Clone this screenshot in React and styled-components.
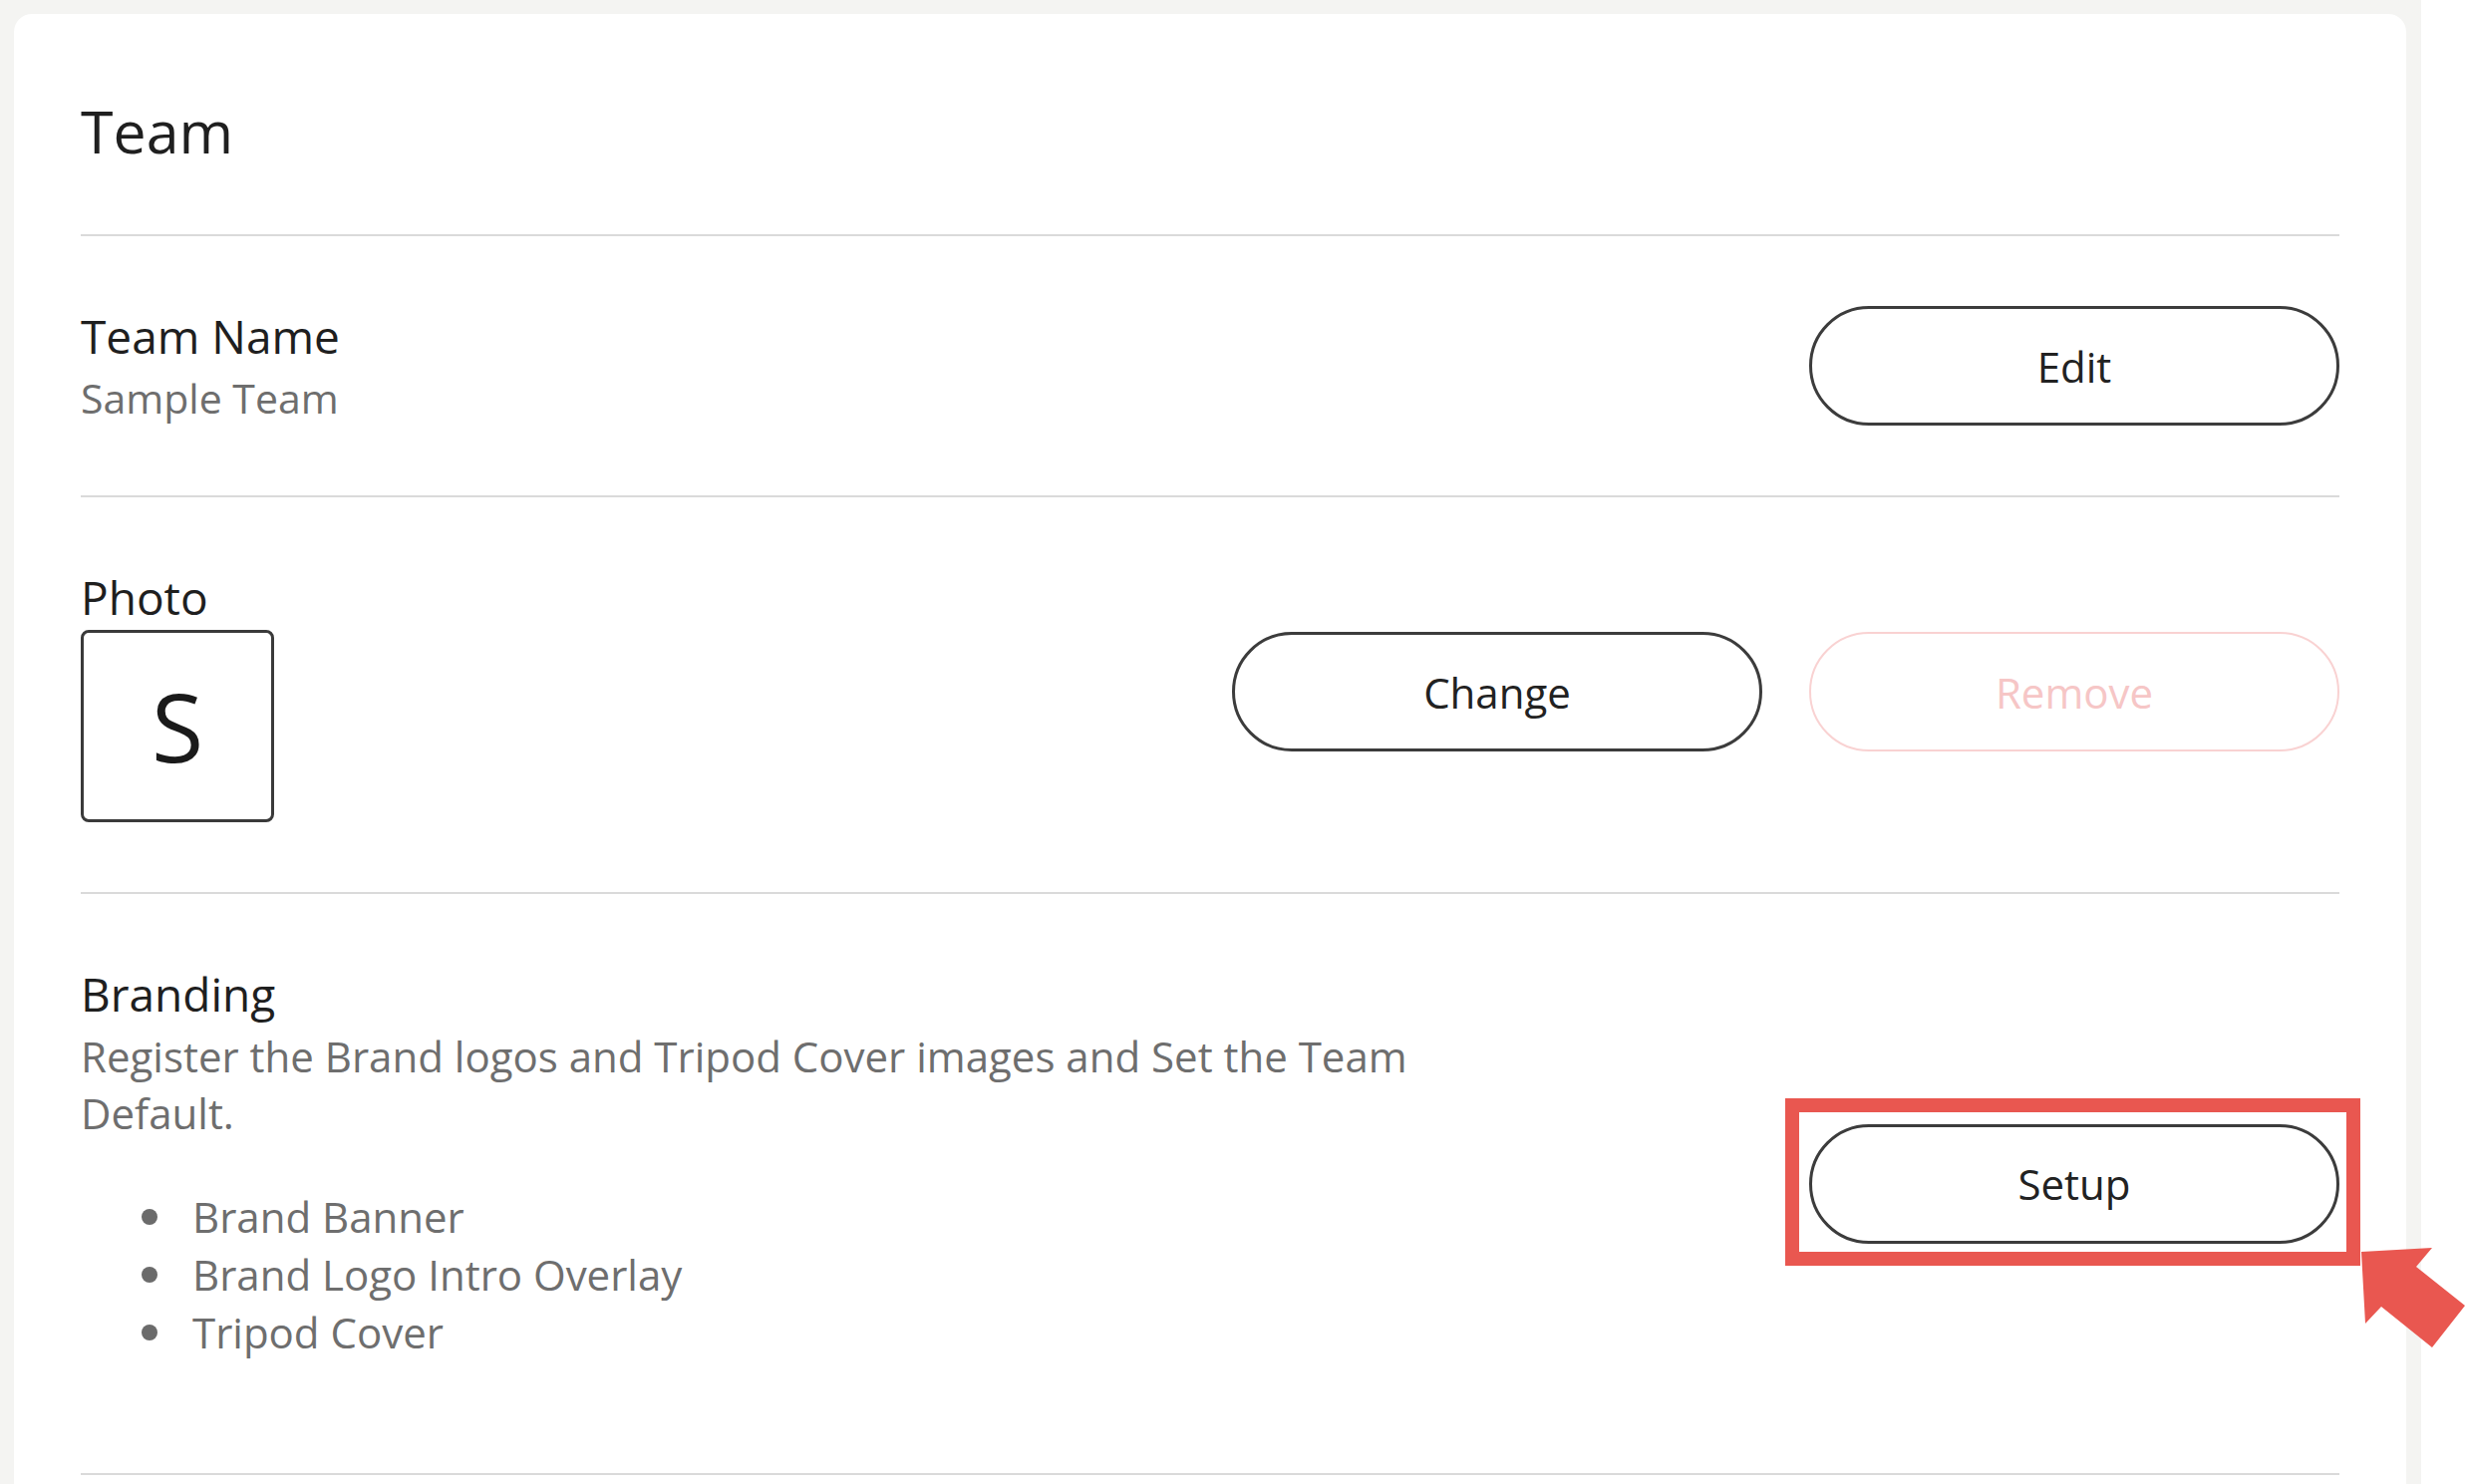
import React from "react"
import styled, { createGlobalStyle } from "styled-components"

// <========== DATA ==========>

const brandingItems = ["Brand Banner", "Brand Logo Intro Overlay", "Tripod Cover"]

// <========== COMPONENT ==========>

function App() {
  return (
    <Page>
      <GlobalStyle />
      <Backdrop>
        <Card>
          <Header>
            <Title>Team</Title>
          </Header>
          <Divider />

          <Row $pad={69.5}>
            <TextBlock>
              <Label>Team Name</Label>
              <Sub>Sample Team</Sub>
            </TextBlock>
            <PillButton>Edit</PillButton>
          </Row>
          <Divider />

          <PhotoSection>
            <Label>Photo</Label>
            <PhotoRow>
              <Avatar>S</Avatar>
              <ButtonGroup>
                <PillButton>Change</PillButton>
                <PillButton $danger>Remove</PillButton>
              </ButtonGroup>
            </PhotoRow>
          </PhotoSection>
          <Divider />

          <Row $pad={70}>
            <TextBlock>
              <Label>Branding</Label>
              <Description>
                Register the Brand logos and Tripod Cover images and Set the Team Default.
              </Description>
              <BulletList>
                {brandingItems.map((item) => (
                  <Bullet key={item}>{item}</Bullet>
                ))}
              </BulletList>
            </TextBlock>
            <Highlighted>
              <PillButton>Setup</PillButton>
              <HighlightFrame />
            </Highlighted>
          </Row>
          <Divider />
        </Card>
      </Backdrop>

      <Pointer viewBox="0 0 113 120" width="113" height="120">
        <polygon points="9,16 80,12 64,31 113,70 80,112 29,71 13,88" fill="#e95750" />
      </Pointer>
    </Page>
  )
}

export default App

// <========== STYLES ==========>

const GlobalStyle = createGlobalStyle`
  * {
    box-sizing: border-box;
  }

  body {
    margin: 0;
    background: #fff;
    font-family: "Open Sans", "Noto Sans", sans-serif;
    overflow: hidden;
  }
`

const Page = styled.div`
  position: relative;
  width: 100%;
  min-height: 100vh;
  background: #fff;
`

const Backdrop = styled.div`
  width: 2429px;
  min-height: 1489px;
  background: #f4f4f2;
  padding: 14px 15px 0 14px;
`

const Card = styled.div`
  min-height: 1600px;
  background: #fff;
  border-radius: 18px 18px 0 0;
  padding: 0 67px;
`

const Header = styled.div`
  padding: 77px 0 64px;
`

const Title = styled.h1`
  margin: 0;
  font-size: 59px;
  font-weight: 400;
  line-height: 80px;
  color: #1f1f1f;
`

const Divider = styled.div`
  height: 2px;
  background: #dadada;
`

const Row = styled.div`
  display: flex;
  justify-content: space-between;
  align-items: center;
  padding: ${(p) => p.$pad}px 0;
`

const TextBlock = styled.div`
  display: flex;
  flex-direction: column;
`

const Label = styled.div`
  font-size: 46px;
  line-height: 60px;
  color: #1f1f1f;
`

const Sub = styled.div`
  margin-top: 4px;
  font-size: 41px;
  line-height: 57px;
  color: #6e6e6e;
`

const Description = styled(Sub)`
  max-width: 1420px;
  font-size: 42px;
`

const BulletList = styled.ul`
  list-style: none;
  margin: 47px 0 42px;
  padding: 0 0 0 61px;
`

const Bullet = styled.li`
  display: flex;
  align-items: center;
  gap: 35px;
  font-size: 42px;
  line-height: 58px;
  color: #6e6e6e;

  &::before {
    content: "";
    width: 16px;
    height: 16px;
    border-radius: 50%;
    background: #6b6b6b;
    flex-shrink: 0;
  }
`

const PhotoSection = styled.div`
  padding: 70px 0;
`

const PhotoRow = styled.div`
  display: flex;
  justify-content: space-between;
  align-items: flex-start;
  margin-top: 3px;
`

const Avatar = styled.div`
  width: 194px;
  height: 193px;
  display: flex;
  align-items: center;
  justify-content: center;
  border: 3px solid #3a3a3a;
  border-radius: 8px;
  font-size: 95px;
  line-height: 1;
  color: #1a1a1a;
`

const ButtonGroup = styled.div`
  display: flex;
  gap: 47px;
  margin-top: 2px;
`

const PillButton = styled.button`
  width: 532px;
  height: 120px;
  border-radius: 60px;
  background: #fff;
  border: ${(p) => (p.$danger ? "2px solid #f9d2d2" : "3px solid #3c3c3c")};
  color: ${(p) => (p.$danger ? "#f6c6c6" : "#222")};
  font-family: inherit;
  font-size: 42px;
  padding: 0;
  cursor: pointer;
`

const Highlighted = styled.div`
  position: relative;
  display: flex;
`

const HighlightFrame = styled.div`
  position: absolute;
  top: -26px;
  left: -24px;
  right: -21px;
  bottom: -22px;
  border: 14px solid #e95750;
  pointer-events: none;
`

const Pointer = styled.svg`
  position: absolute;
  left: 2360px;
  top: 1240px;
  display: block;
`
